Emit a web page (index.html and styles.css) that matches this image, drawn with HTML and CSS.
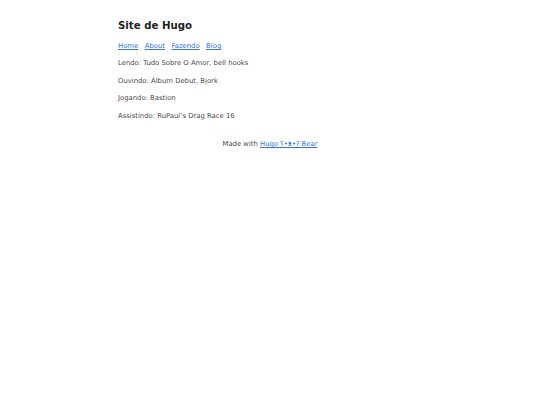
FILE: index.html
```html
<!DOCTYPE html>
<html lang="pt">
<head>
	<meta charset="UTF-8">
	<title>Site de Hugo</title>
	<link rel="stylesheet" href="styles.css">
</head>
<body>
	<header>
		<a href="#" class="title"><h2>Site de Hugo</h2></a>
		<nav>
			<a href="#">Home</a>
			<a href="#">About</a>
			<a href="#">Fazendo</a>
			<a href="#">Blog</a>
		</nav>
	</header>
	<main>
		<p>Lendo: Tudo Sobre O Amor, bell hooks</p>
		<p>Ouvindo: Álbum Debut, Bjork</p>
		<p>Jogando: Bastion</p>
		<p>Assistindo: RuPaul’s Drag Race 16</p>
	</main>
	<footer>
		Made with <a href="#">Hugo ʕ•ᴥ•ʔ Bear</a>
	</footer>
</body>
</html>
```

FILE: styles.css
```css
body{
	font-family: "DejaVu Sans", Verdana, sans-serif;
	font-size: 6.85px;
	margin: auto;
	padding: 9px;
	max-width: 304px;
	text-align: left;
	background-color: #fff;
	line-height: 10.5px;
	color: #4a4a4a;
}
h1, h2, h3{
	font-family: "DejaVu Sans", Verdana, sans-serif;
	color: #222;
}
a{
	color: #3273dc;
}
.title{
	text-decoration: none;
	border: 0;
}
.title h2{
	font-size: 10.2px;
	line-height: 15.75px;
	margin: 8.7px 0 7.9px;
}
nav a{
	margin-right: 4.3px;
}
p{
	margin: 6.5px 0;
	line-height: 11px;
}
footer{
	padding: 11px;
	text-align: center;
}
```
